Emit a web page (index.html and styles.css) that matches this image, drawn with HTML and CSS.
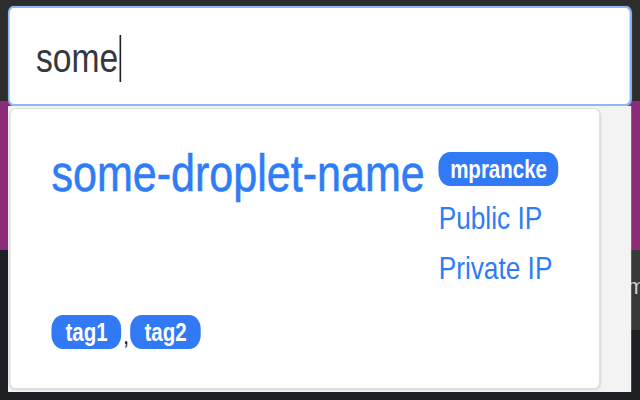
FILE: index.html
```html
<!DOCTYPE html>
<html>
<head>
<meta charset="utf-8">
<link rel="stylesheet" href="styles.css">
</head>
<body>
<div class="page">
  <div class="top-strip"></div>
  <div class="purple-band"></div>
  <div class="bottom-area">
    <div class="side-tab"><span class="side-letter">m</span></div>
  </div>
</div>

<div class="popup">
  <div class="search">
    <span class="query">some</span><span class="caret"></span>
  </div>
  <div class="dropdown">
    <div class="card">
      <div class="card-main">
        <div class="droplet-name">some-droplet-name</div>
        <div class="meta">
          <span class="badge">mprancke</span>
          <div class="ip">Public IP</div>
          <div class="ip">Private IP</div>
        </div>
      </div>
      <div class="tags"><span class="badge tag">tag1</span><span class="comma">,</span><span class="badge tag">tag2</span></div>
    </div>
  </div>
</div>
</body>
</html>
```

FILE: styles.css
```css
* { box-sizing: border-box; }
html, body { margin: 0; padding: 0; }
body {
  width: 640px;
  height: 400px;
  overflow: hidden;
  position: relative;
  font-family: "Liberation Sans", Arial, Helvetica, sans-serif;
  background: #1f2023;
}

.page { display: flex; flex-direction: column; height: 400px; }
.top-strip { height: 101px; background: #2d2d2d; }
.purple-band { height: 149px; background: #8b2b7a; }
.bottom-area { flex: 1; background: #1f2023; display: flex; justify-content: flex-end; align-items: flex-start; }
.side-tab { width: 10px; height: 80px; background: #393939; overflow: hidden; padding-top: 26px; }
.side-letter { color: #d0d0d0; font-size: 22px; line-height: 1; display: block; margin-left: -3px; }

/* The popup overlays the page; the reference capture is horizontally
   compressed, so the popup is laid out at natural width and squeezed. */
.popup {
  position: absolute;
  left: 8px;
  top: 6px;
  width: 760px;
  transform: scaleX(0.82);
  transform-origin: left top;
}

.search {
  height: 100px;
  background: #fff;
  border: 2px solid #8db8f6;
  border-radius: 7px;
  box-shadow: 0 0 1px #8db8f6;
  display: flex;
  align-items: center;
  padding-left: 32px;
  padding-top: 4px;
}
.query {
  font-size: 41px;
  color: #35383c;
  line-height: 1;
}
.caret {
  width: 2px;
  height: 47px;
  background: #222;
  margin-left: 2px;
}

.dropdown {
  height: 286px;
  background: #f3f3f3;
  padding: 2px 38px 3px 2px;
}
.card {
  height: 281px;
  background: #fff;
  border: 1px solid #dcdcdc;
  border-radius: 7px;
  box-shadow: 0 1px 2px rgba(0,0,0,0.12);
  padding: 33px 0 0 50px;
}
.card-main { display: flex; align-items: flex-start; }
.droplet-name {
  font-size: 52.5px;
  line-height: 61px;
  color: #2f7cf6;
  -webkit-text-stroke: 0.6px #2f7cf6;
  white-space: nowrap;
}
.meta {
  margin-left: 17px;
  padding-top: 10px;
  display: flex;
  flex-direction: column;
  align-items: flex-start;
}
.badge {
  display: inline-block;
  height: 34px;
  line-height: 34px;
  padding: 0 14px;
  border-radius: 14px;
  background: #3279f5;
  color: #fff;
  font-weight: bold;
  font-size: 25px;
}
.badge.tag { padding: 0 17px; }
.ip {
  margin-top: 7px;
  font-size: 32px;
  line-height: 50px;
  color: #2f7cf6;
}
.ip + .ip { margin-top: 0; }

.tags {
  margin-top: 22px;
  display: flex;
  align-items: flex-end;
}
.comma {
  font-size: 25px;
  line-height: 34px;
  color: #111;
  margin: 0 2px 0 2px;
  position: relative;
  top: 3px;
}
```
